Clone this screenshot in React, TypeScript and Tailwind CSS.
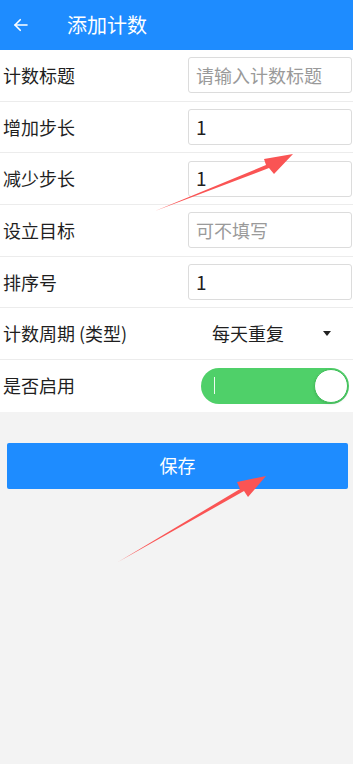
import { useState } from "react";

const FONT = { fontFamily: '"Noto Sans CJK SC", "Noto Sans", sans-serif' };

function InputRow({ label, value, placeholder }: { label: string; value?: string; placeholder?: string }) {
  return (
    <div className="flex h-[51.7px] items-center border-b border-[#ececec] pl-[3px] pr-px">
      <span className="flex-1 text-[18px] text-[#1f1f1f]">{label}</span>
      <div className="flex h-[36px] w-[164px] items-center rounded-[3px] border border-[#dcdcdc] bg-white px-[7px]">
        {value ? (
          <span className="text-[19px] text-[#1f1f1f]">{value}</span>
        ) : (
          <span className="text-[18px] text-[#9a9a9a]">{placeholder}</span>
        )}
      </div>
    </div>
  );
}

export default function App() {
  const [enabled, setEnabled] = useState(true);

  return (
    <div className="relative min-h-[764px] w-[353px] bg-[#f3f3f3]" style={FONT}>
      {/* Header */}
      <div className="flex h-[50px] items-center bg-[#1e8cff] text-white shadow-[0_1px_2px_rgba(0,0,0,0.08)]">
        <svg className="ml-[12px]" width="18" height="18" viewBox="0 0 24 24" fill="none" stroke="white" strokeWidth="2.2" strokeLinecap="round" strokeLinejoin="round">
          <path d="M20 12H4" />
          <path d="M11 5l-7 7 7 7" />
        </svg>
        <span className="ml-[37px] text-[20px]">添加计数</span>
      </div>

      {/* Form */}
      <div className="bg-white">
        <InputRow label="计数标题" placeholder="请输入计数标题" />
        <InputRow label="增加步长" value="1" />
        <InputRow label="减少步长" value="1" />
        <InputRow label="设立目标" placeholder="可不填写" />
        <InputRow label="排序号" value="1" />

        <div className="flex h-[51.7px] items-center border-b border-[#ececec] pl-[3px]">
          <span className="flex-1 text-[18px] text-[#1f1f1f]">计数周期 (类型)</span>
          <span className="mr-[39px] text-[18px] text-[#1f1f1f]">每天重复</span>
          <svg className="mr-[22px]" width="8" height="5" viewBox="0 0 8 5">
            <path d="M0 0h8L4 5z" fill="#222" />
          </svg>
        </div>

        <div className="flex h-[51.7px] items-center pl-[3px] pr-[4px]">
          <span className="flex-1 text-[18px] text-[#1f1f1f]">是否启用</span>
          <button
            onClick={() => setEnabled(!enabled)}
            className={`relative flex h-[36px] w-[148px] items-center rounded-full ${enabled ? "bg-[#4fd069]" : "bg-[#d5d5d5]"}`}
          >
            <span className="ml-[13px] h-[17px] w-px bg-white/90" />
            <span
              className={`absolute top-[1px] h-[34px] w-[34px] rounded-full border border-[#3fbf58] bg-white shadow-sm ${enabled ? "right-[1px]" : "left-[1px]"}`}
            />
          </button>
        </div>
      </div>

      {/* Save button */}
      <div className="px-[7px] pr-[5px] pt-[31px]">
        <button className="flex h-[46px] w-full items-center justify-center rounded-[2px] bg-[#1e8cff] text-[18px] text-white">
          保存
        </button>
      </div>

      {/* Annotation arrows */}
      <svg className="pointer-events-none absolute left-0 top-0" width="353" height="764">
        <path d="M155 211 L266 165 L264 159 L293 154 L274 174 L269 168 Z" fill="#fa5454" />
        <path d="M118 562 L240 489 L237 482 L266 476 L248 497 L244 491 Z" fill="#fa5454" />
      </svg>
    </div>
  );
}
